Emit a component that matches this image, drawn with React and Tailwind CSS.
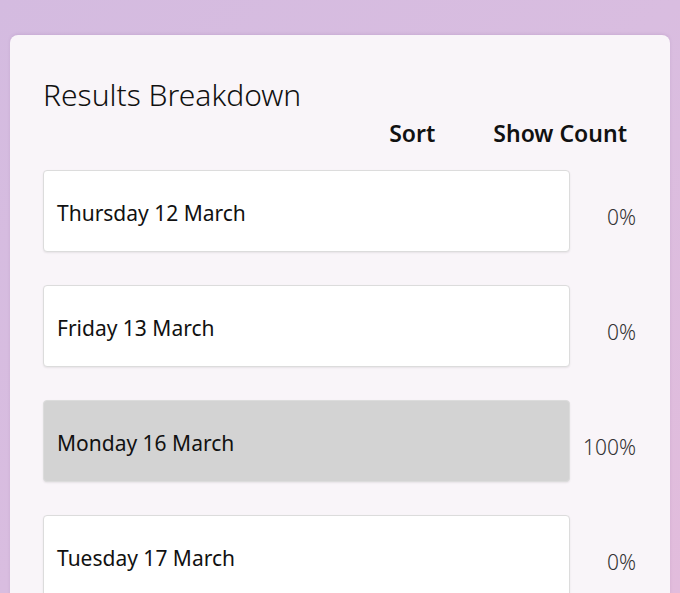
export default function App() {
  const rows = [
    { label: "Thursday 12 March", pct: "0%", sel: false },
    { label: "Friday 13 March", pct: "0%", sel: false },
    { label: "Monday 16 March", pct: "100%", sel: true },
    { label: "Tuesday 17 March", pct: "0%", sel: false },
  ];
  return (
    <div
      className="w-[680px] h-[593px] overflow-hidden bg-gradient-to-br from-[#d4bbe0] via-[#d9bde0] to-[#e2bcdc] pt-[35px] px-[10px]"
      style={{ fontFamily: '"Segoe UI", "Noto Sans", sans-serif' }}
    >
      <div className="w-[660px] h-[600px] rounded-t-[8px] bg-[#f9f5f9] pt-[40px] pl-[33px] pr-[34px] shadow-[0_-1px_3px_rgba(120,80,140,0.15)]">
        <h1 className="text-[30px] leading-[40px] font-light text-[#111] tracking-[0px]">Results Breakdown</h1>
        <div className="flex justify-end gap-[58px] mt-[3px] pr-[9px] text-[23px] leading-[30px] font-semibold text-[#111]">
          <span>Sort</span>
          <span>Show Count</span>
        </div>
        <div className="flex flex-col gap-[33px] mt-[22px]">
          {rows.map((r) => (
            <div key={r.label} className="flex items-center">
              <div
                className={`w-[527px] h-[82px] shrink-0 rounded-[4px] border border-[#dcdcdc] shadow-[0_1px_2px_rgba(0,0,0,0.08)] flex items-center pl-[13px] pt-[5px] text-[21px] text-[#111] ${
                  r.sel ? "bg-[#d3d3d3]" : "bg-white"
                }`}
              >
                {r.label}
              </div>
              <div className="flex-1 text-right pt-[14px] text-[21px] font-light text-[#333]">{r.pct}</div>
            </div>
          ))}
        </div>
      </div>
    </div>
  );
}
